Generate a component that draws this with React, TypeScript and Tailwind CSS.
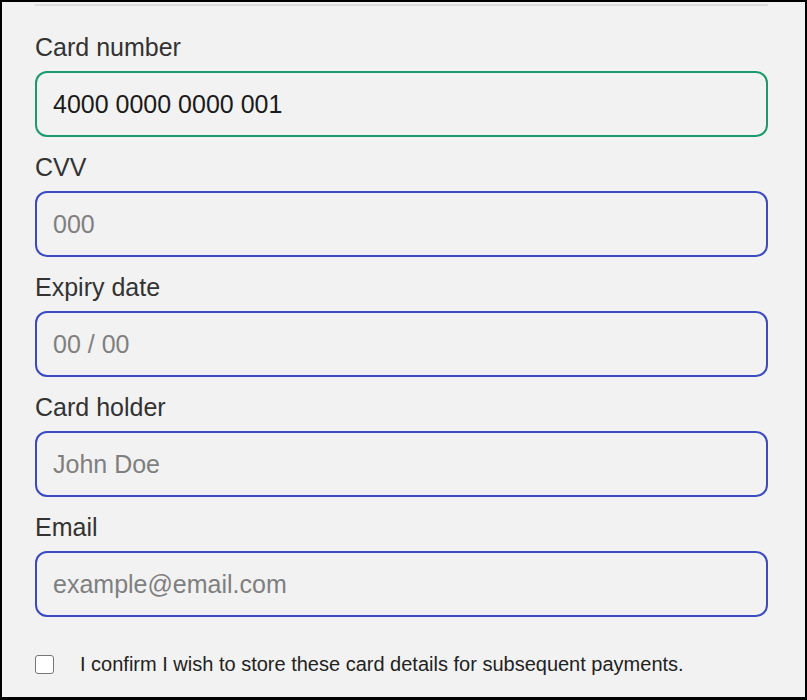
import { useState } from "react";

type Field = {
  label: string;
  placeholder: string;
  value?: string;
  valid?: boolean;
};

const fields: Field[] = [
  { label: "Card number", placeholder: "0000 0000 0000 0000", value: "4000 0000 0000 001", valid: true },
  { label: "CVV", placeholder: "000" },
  { label: "Expiry date", placeholder: "00 / 00" },
  { label: "Card holder", placeholder: "John Doe" },
  { label: "Email", placeholder: "example@email.com" },
];

export default function App() {
  const [values, setValues] = useState<string[]>(fields.map((field) => field.value ?? ""));
  const [store, setStore] = useState(false);

  return (
    <div
      className="h-[700px] w-[807px] overflow-hidden border-2 border-b-[3px] border-black bg-[#f2f2f2]"
      style={{ fontFamily: '"Liberation Sans", Arial, sans-serif' }}
    >
      <div className="ml-[33px] mr-[37px] mt-[2px] h-[2px] bg-[#dedede]" />

      <div className="mt-[27px] flex flex-col gap-[16px] pl-[33px] pr-[37px]">
        {fields.map((field, index) => (
          <label key={field.label} className="flex flex-col gap-[9px]">
            <span className="text-[25px] leading-[29px] text-[#333333]">{field.label}</span>
            <input
              className={`box-border h-[66px] w-full rounded-[12px] border-[2.5px] bg-[#f2f2f2] px-[16px] text-[25px] text-[#1a1a1a] outline-none placeholder:text-[#7f7f7f] ${
                field.valid ? "border-[#1b9a6c]" : "border-[#3c4bbf]"
              }`}
              placeholder={field.placeholder}
              type="text"
              value={values[index]}
              onChange={(event) => {
                const next = [...values];
                next[index] = event.target.value;
                setValues(next);
              }}
            />
          </label>
        ))}
      </div>

      <label className="mt-[32px] flex items-center pl-[33px]">
        <input
          checked={store}
          className="h-[19px] w-[19px] appearance-none rounded-[3px] border-[1.5px] border-[#767676] bg-white"
          type="checkbox"
          onChange={(event) => setStore(event.target.checked)}
        />
        <span className="ml-[26px] text-[20px] text-[#222222]">
          I confirm I wish to store these card details for subsequent payments.
        </span>
      </label>
    </div>
  );
}
